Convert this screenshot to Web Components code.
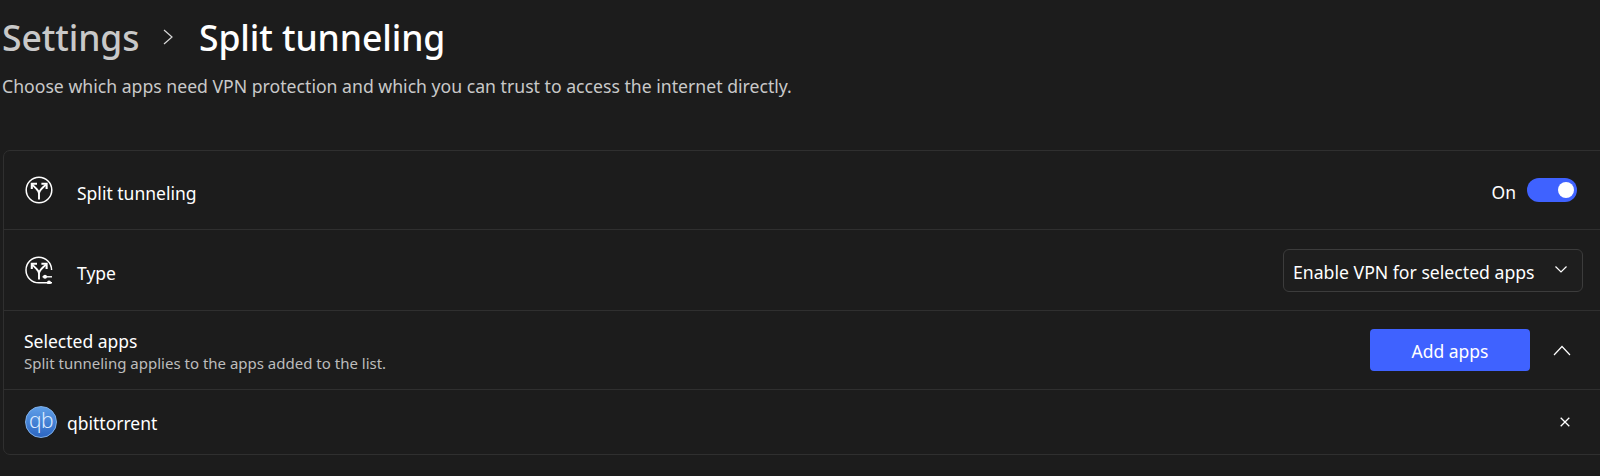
<!DOCTYPE html>
<html>
	<head>
		<style>
			html,body{margin:0; padding:0; background:#1c1c1c; overflow:hidden;}
			body{width:1600px; height:476px; font-family:"Noto Sans","Open Sans",sans-serif; color:#fff;}
		</style>
	</head>
	<body>
		<vpn-page>
			<page-title slot="title" parent="Settings" current="Split tunneling">Choose which apps need VPN protection and which you can trust to access the internet directly.</page-title>

			<settings-row style="height:79px">
				<svg slot="icon" width="28" height="28" viewBox="0 0 28 28" fill="none" stroke="#fff" stroke-width="1.5">
					<circle cx="14" cy="14" r="12.8"/>
					<path d="M14 23.5V17.5C14 15 12.6 14 11 12.4L7 8.4" stroke-width="1.9"/>
					<path d="M14 17.5C14 14.5 16 13.4 21 8.6" stroke-width="1.9"/>
					<path d="M6.8 13V7.8H12M16.4 7.8H21.6V13" stroke-width="2.1"/>
				</svg>
				<span slot="label">Split tunneling</span>
				<vpn-toggle slot="control" label="On"></vpn-toggle>
			</settings-row>

			<settings-row style="height:81px">
				<svg slot="icon" width="28" height="28" viewBox="0 0 28 28" fill="none" stroke="#fff" stroke-width="1.5">
					<path d="M26.6 14A12.8 12.8 0 1 0 14 26.8H27"/>
					<path d="M14 23.5V17.5C14 15 12.6 14 11 12.4L7 8.4" stroke-width="1.9"/>
					<path d="M14 17.5C14 14.5 16 13.4 21 8.6" stroke-width="1.9"/>
					<path d="M6.8 13V7.8H12M16.4 7.8H21.6V13" stroke-width="2.1"/>
					<path d="M17.5 20.8H27" stroke-width="1.4"/>
					<circle cx="20" cy="20.8" r="2" fill="#fff" stroke="none"/>
					<circle cx="24" cy="26.6" r="2" fill="#fff" stroke="none"/>
				</svg>
				<span slot="label">Type</span>
				<vpn-select slot="control">Enable VPN for selected apps</vpn-select>
			</settings-row>

			<settings-row style="height:79px" flat>
				<span slot="label">Selected apps</span>
				<span slot="sub">Split tunneling applies to the apps added to the list.</span>
				<vpn-button slot="control">Add apps</vpn-button>
				<svg slot="end" width="18" height="11" viewBox="0 0 18 11" fill="none" stroke="#fff" stroke-width="1.2"><path d="M1 10L9 1.5L17 10"/></svg>
			</settings-row>

			<app-row name="qbittorrent" last></app-row>
		</vpn-page>

		<script>
			class VpnPage extends HTMLElement{
				connectedCallback(){
					this.attachShadow({mode : 'open'});
					this.shadowRoot.innerHTML = `
						<style>
							:host{display:block; width:1600px; height:476px; overflow:hidden; box-sizing:border-box; padding:0 0 0 3px;}
							.card{width:1610px; box-sizing:border-box; margin-top:52px; border:1px solid #2f2f2f; border-radius:7px; display:flex; flex-direction:column;}
						</style>
						<slot name="title"></slot>
						<div class="card"><slot></slot></div>`;
				}
			}
			customElements.define("vpn-page", VpnPage);

			class PageTitle extends HTMLElement{
				connectedCallback(){
					this.attachShadow({mode : 'open'});
					this.shadowRoot.innerHTML = `
						<style>
							:host{display:block; padding-top:12px; margin-left:-1px;}
							.crumbs{display:flex; align-items:center; height:50px; font-size:35.5px; font-weight:500; letter-spacing:-.1px;}
							.parent{color:#c9c9c9; width:161px;}
							svg{width:10px; height:16px; margin-right:26px;}
							.desc{font-size:17.65px; line-height:24px; color:#c9c9c9; margin-top:12px;}
						</style>
						<div class="crumbs">
							<span class="parent">${this.getAttribute('parent')}</span>
							<svg viewBox="0 0 10 16" fill="none" stroke="#d8d8d8" stroke-width="1.2"><path d="M1 1L9 8L1 15"/></svg>
							<span>${this.getAttribute('current')}</span>
						</div>
						<div class="desc"><slot></slot></div>`;
				}
			}
			customElements.define("page-title", PageTitle);

			class SettingsRow extends HTMLElement{
				connectedCallback(){
					this.attachShadow({mode : 'open'});
					this.shadowRoot.innerHTML = `
						<style>
							:host{display:flex; align-items:center; box-sizing:border-box; border-bottom:1px solid #2f2f2f; padding:0 29px 0 21px; font-size:17.5px;}
							.icon{display:flex; width:52px; flex:none; margin-top:-1px;}
							.text{flex:1; display:flex; flex-direction:column; padding-top:5px;}
							.sub{font-size:15px; color:#bdbdbd; line-height:20px;}
							.control{display:flex; align-items:center;}
							.end{display:none;}
							:host([flat]) {padding-left:20px;}
							:host([flat]) .icon{display:none;}
							:host([flat]) .text{line-height:24px; padding-top:2px;}
							:host([flat]) .end{display:flex; margin:0 12px 0 23px;}
						</style>
						<div class="icon"><slot name="icon"></slot></div>
						<div class="text"><slot name="label"></slot><div class="sub"><slot name="sub"></slot></div></div>
						<div class="control"><slot name="control"></slot></div>
						<div class="end"><slot name="end"></slot></div>`;
				}
			}
			customElements.define("settings-row", SettingsRow);

			class VpnToggle extends HTMLElement{
				connectedCallback(){
					this.attachShadow({mode : 'open'});
					this.shadowRoot.innerHTML = `
						<style>
							:host{display:flex; align-items:center; gap:11px; font-size:17.5px; margin-right:6px;}
							span{padding-top:4px;}
							.track{width:50px; height:24px; border-radius:12px; background:#3f62ff; display:flex; align-items:center; justify-content:flex-end; padding-right:3px; box-sizing:border-box;}
							.knob{width:16px; height:16px; border-radius:50%; background:#fff;}
						</style>
						<span>${this.getAttribute('label')}</span>
						<div class="track"><div class="knob"></div></div>`;
				}
			}
			customElements.define("vpn-toggle", VpnToggle);

			class VpnSelect extends HTMLElement{
				connectedCallback(){
					this.attachShadow({mode : 'open'});
					this.shadowRoot.innerHTML = `
						<style>
							:host{display:flex; align-items:center; justify-content:space-between; box-sizing:border-box; width:300px; height:43px; border:1px solid #3c3c3c; border-radius:6px; padding:0 15px 0 9px; font-size:17.65px; background:#1e1e1e;}
							span{padding-top:4px;}
							svg{width:12px; height:7px; margin-top:-2px;}
						</style>
						<span><slot></slot></span>
						<svg viewBox="0 0 12 7" fill="none" stroke="#fff" stroke-width="1.2"><path d="M.5 .5L6 6L11.5 .5"/></svg>`;
				}
			}
			customElements.define("vpn-select", VpnSelect);

			class VpnButton extends HTMLElement{
				connectedCallback(){
					this.attachShadow({mode : 'open'});
					this.shadowRoot.innerHTML = `
						<style>
							:host{display:flex; align-items:center; justify-content:center; width:160px; height:42px; background:#3f62ff; border-radius:4px; font-size:17.5px; color:#fff; padding-top:2px; box-sizing:border-box;}
						</style>
						<slot></slot>`;
				}
			}
			customElements.define("vpn-button", VpnButton);

			class AppRow extends HTMLElement{
				connectedCallback(){
					this.attachShadow({mode : 'open'});
					this.shadowRoot.innerHTML = `
						<style>
							:host{display:flex; align-items:center; height:64px; box-sizing:border-box; padding:0 42px 0 21px; font-size:17.5px;}
							.logo{width:32px; height:32px; flex:none; box-sizing:border-box; border-radius:50%; border:1px solid #7fb0ea; background:linear-gradient(#5f9fe8,#2c66c2); color:#dcebff; font-size:21px; font-weight:300; line-height:26px; display:flex; justify-content:center; margin-right:10px; letter-spacing:-.5px;}
							.name{flex:1; padding-top:2px;}
							svg{width:10px; height:10px;}
						</style>
						<div class="logo">qb</div>
						<span class="name">${this.getAttribute('name')}</span>
						<svg viewBox="0 0 10 10" fill="none" stroke="#fff" stroke-width="1.3"><path d="M.7 .7L9.3 9.3M9.3 .7L.7 9.3"/></svg>`;
				}
			}
			customElements.define("app-row", AppRow);
		</script>
	</body>
</html>
